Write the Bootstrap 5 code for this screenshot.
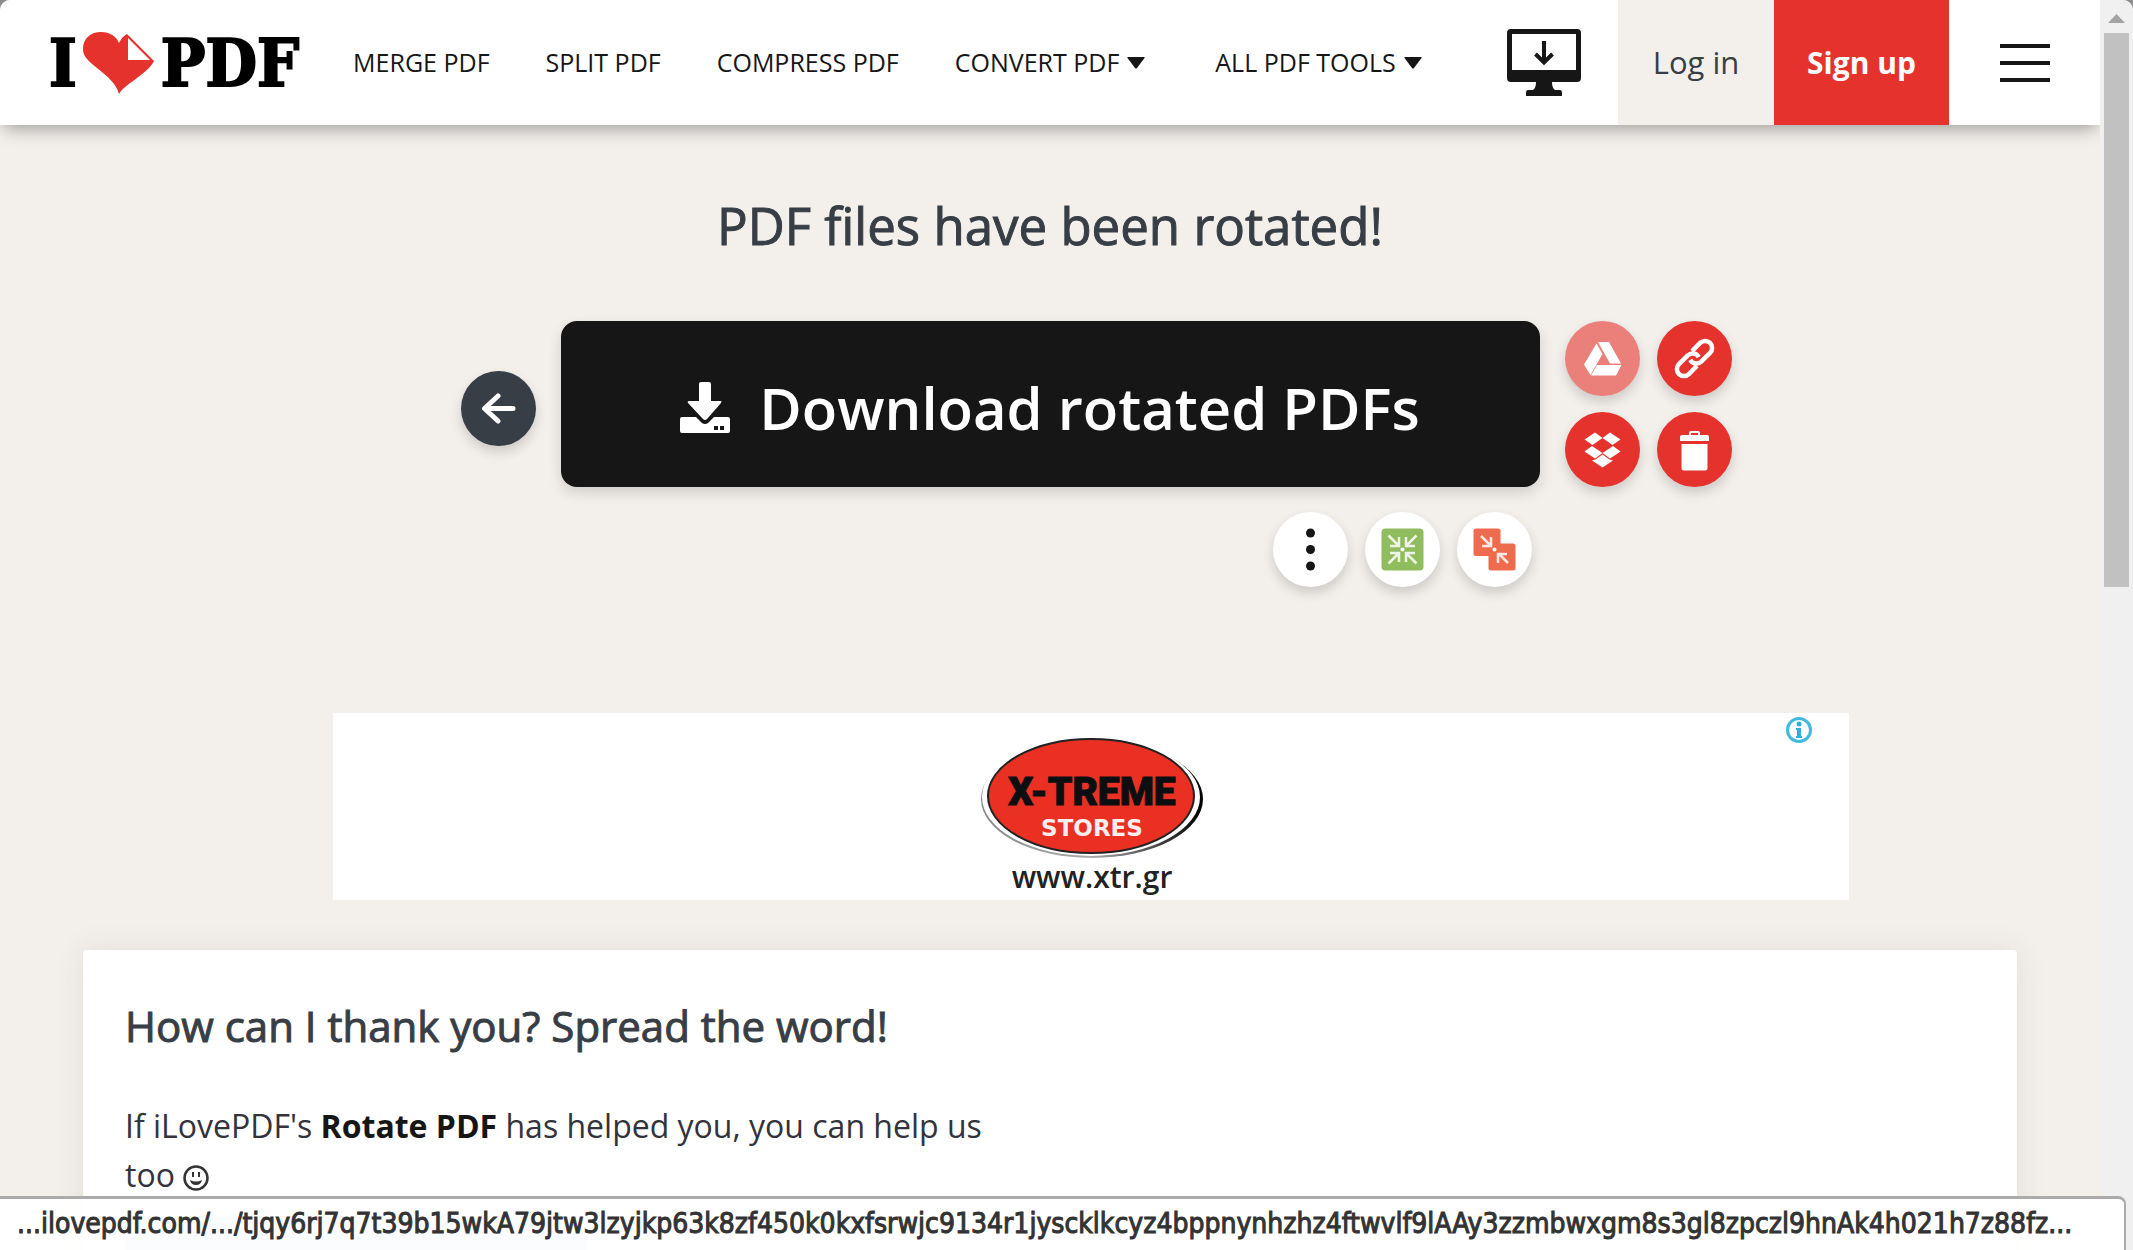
<!DOCTYPE html>
<html lang="en">
<head>
<meta charset="utf-8">
<meta name="viewport" content="width=device-width, initial-scale=1">
<title>iLovePDF - Download rotated PDFs</title>
<link href="https://cdn.jsdelivr.net/npm/bootstrap@5.3.0/dist/css/bootstrap.min.css" rel="stylesheet">
<style>
  :root { --brand: #e5322d; --ink: #161616; --slate: #383e45; --sand: #f3f0ec; }
  body { background: #8c8c8c; color: var(--slate); font-family: "Open Sans", "Noto Sans", sans-serif; }
  a { color: inherit; text-decoration: none; }
  .window { background: var(--sand); border-radius: 10px 10px 0 0; }
  .topbar { min-height: 125px; background: #fff; box-shadow: 0 8px 16px -4px rgba(0,0,0,.34); z-index: 2; }
  .logo { font: bold 66px/1 "DejaVu Serif Condensed", "DejaVu Serif", serif; color: #000; padding-left: 49px; gap: 6px; -webkit-text-stroke: 2px #000; }
  .main-links { gap: 56px; padding-left: 54px; font-size: 25px; color: var(--ink); white-space: nowrap; }
  .main-links .has-menu { gap: 8px; padding-right: 14px; }
  .desktop-link { padding-right: 37px; }
  .account { font-size: 31px; white-space: nowrap; }
  .account-login { background: var(--sand); width: 156px; }
  .account-signup { background: var(--brand); color: #fff; font-size: 30px; font-weight: 700; width: 175px; }
  .menu-btn { width: 151px; border: 0; background: none; }
  .done-title { font-size: 51px; line-height: 60px; font-weight: 400; margin: 70px 0 66px; -webkit-text-stroke: 1px; }
  .download-grid { display: grid; grid-template-columns: 1fr minmax(0, 979px) 1fr; column-gap: 25px; row-gap: 25px; align-items: center; }
  .download-btn { height: 166px; border: 0; border-radius: 16px; background: var(--ink); color: #fff; font-size: 58px; font-weight: 600; gap: 29px; padding-top: 8px; box-shadow: 0 6px 14px rgba(0,0,0,.14); }
  .round { display: block; width: 75px; height: 75px; border: 0; padding: 0; border-radius: 50%; background: var(--brand); box-shadow: 0 6px 12px rgba(0,0,0,.16); }
  .round svg { display: block; }
  .round-back { background: var(--slate); margin-top: 8px; }
  .round-soft { background: #eb807b; }
  .round-white { background: #fff; }
  .side-tools { display: grid; grid-template-columns: 75px 75px; gap: 16px 17px; }
  .more-tools { gap: 17px; padding-right: 8px; }
  .ad { background: #fff; width: 1516px; max-width: 90%; height: 187px; margin: 126px 0 50px 333px; }
  .ad-info { right: 36px; top: 3px; }
  .thanks { background: #fff; border-radius: 4px; margin: 0 83px; padding: 46px 42px; min-height: 480px; box-shadow: 0 0 32px rgba(60,50,20,.09); }
  .thanks h2 { font-size: 42px; line-height: 60px; font-weight: 400; margin: 0 0 45px; -webkit-text-stroke: 1px; }
  .thanks p { font-size: 32px; line-height: 49px; max-width: 880px; margin: 0 0 18px; color: #33333b; }
  .thanks strong { color: var(--ink); font-weight: 700; }
  .share-box { width: 462px; height: 140px; background: #8fa3cc; }
  .status { left: 0; bottom: 0; right: 7px; height: 54px; border: 2px solid #ababab; border-left: 0; border-bottom: 0; border-top-width: 3px; border-radius: 0 8px 0 0; background: rgba(255,255,255,.96); color: #333; font: 28px/50px "DejaVu Sans Condensed", "DejaVu Sans", sans-serif; -webkit-text-stroke: 1px; padding-left: 17px; white-space: nowrap; z-index: 3; }
  .scroll-track { width: 33px; background: #f0f0f0; padding: 14px 4px 0; }
  .scroll-thumb { height: 554px; width: 25px; background: #c1c1c1; margin-top: 10px; }
</style>
</head>
<body>
<div class="window d-flex vh-100 overflow-hidden position-relative">
  <div class="flex-grow-1 overflow-hidden">
    <header class="topbar d-flex align-items-stretch position-relative">
      <a href="#" class="logo d-flex align-items-center" aria-label="I love PDF">
        <span>I</span>
        <svg width="72" height="62" viewBox="0 0 72 62" aria-hidden="true"><path fill="#e5322d" d="M36 62C33 51 24 44 14 36 5 29 0 24 0 17 0 6 8 0 18 0c9 0 15 4 18 11 2-4 4-7 8-9l27 27c-3 6-9 11-17 17-9 7-15 10-18 16z"/><path fill="#fff" d="M45 6v22h22z"/></svg>
        <span>PDF</span>
      </a>
      <nav class="main-links d-flex align-items-center flex-grow-1" aria-label="Tools">
        <a href="#">MERGE PDF</a>
        <a href="#">SPLIT PDF</a>
        <a href="#">COMPRESS PDF</a>
        <a href="#" class="has-menu d-flex align-items-center">CONVERT PDF <svg width="18" height="12" viewBox="0 0 18 12"><path fill="#161616" d="M1 0h16q1 0 .5 1L10 11q-1 1-2 0L.5 1Q0 0 1 0z"/></svg></a>
        <a href="#" class="has-menu d-flex align-items-center">ALL PDF TOOLS <svg width="18" height="12" viewBox="0 0 18 12"><path fill="#161616" d="M1 0h16q1 0 .5 1L10 11q-1 1-2 0L.5 1Q0 0 1 0z"/></svg></a>
      </nav>
      <a href="#" class="desktop-link d-flex align-items-center" aria-label="Desktop app">
        <svg width="74" height="67" viewBox="0 0 74 67"><path fill="#161616" fill-rule="evenodd" d="M4 0h66q4 0 4 4v45q0 4-4 4H45q0 6 3 8h5q2 0 2 3v3H19v-3q0-3 2-3h5q3-2 3-8H4q-4 0-4-4V4q0-4 4-4zm1 5v36h64V5z"/><path d="M37 12v21M28.500 25l8.500 8.500 8.500-8.500" fill="none" stroke="#161616" stroke-width="4"/></svg>
      </a>
      <div class="account d-flex">
        <a href="#" class="account-login d-flex align-items-center justify-content-center">Log in</a>
        <a href="#" class="account-signup d-flex align-items-center justify-content-center">Sign up</a>
      </div>
      <button type="button" class="menu-btn d-flex align-items-center justify-content-center" aria-label="Menu">
        <svg width="50" height="40" viewBox="0 0 50 40"><path d="M0 3h50M0 20h50M0 37h50" stroke="#161616" stroke-width="4"/></svg>
      </button>
    </header>

    <main>
      <h1 class="done-title text-center">PDF files have been rotated!</h1>
      <div class="download-grid">
        <a href="#" class="round round-back ms-auto" aria-label="Back"><svg width="75" height="75" viewBox="0 0 75 75"><path d="M52 37.500H24M37 25L23.500 37.500 37 50" fill="none" stroke="#fff" stroke-width="5" stroke-linecap="round" stroke-linejoin="round"/></svg></a>
        <button type="button" class="download-btn d-flex align-items-center justify-content-center">
          <svg width="50" height="51" viewBox="0 0 50 51" aria-hidden="true"><path fill="#fff" d="M19 2q0-2 2-2h8q2 0 2 2v17h10q1 0 0 2L27 37q-2 2-4 0L8 21q-1-2 1-2h10z"/><path fill="#fff" fill-rule="evenodd" d="M2 35h14l6 6q3 2 6 0l6-6h14q2 0 2 2v12q0 2-2 2H2q-2 0-2-2V37q0-2 2-2zm32 9v4h4v-4zm6 0v4h4v-4z"/></svg>
          <span>Download rotated PDFs</span>
        </button>
        <div class="side-tools">
          <button type="button" class="round round-soft" aria-label="Save to Google Drive"><svg width="75" height="75" viewBox="0 0 75 75"><path fill="#fff" d="M31.500 22.500l6 10.500L25.500 54l-6.500-10.500zM33 21h11l12 21.500H45zM32 44h24.500L51 54.500H26z"/></svg></button>
          <button type="button" class="round" aria-label="Share link"><svg width="75" height="75" viewBox="0 0 75 75"><g transform="rotate(-45 37.500 37.500)" fill="none" stroke="#fff" stroke-width="4.500"><path d="M34 44.500H22.500a7 7 0 0 1 0-14H35a7 7 0 0 1 6.500 9"/><path d="M41 30.500h11.500a7 7 0 0 1 0 14H40a7 7 0 0 1-6.500-9"/></g></svg></button>
          <button type="button" class="round" aria-label="Save to Dropbox"><svg width="75" height="75" viewBox="0 0 75 75"><path fill="#fff" d="M19.500 27.500L30 20.500l7.500 5.500-10 7zM55.500 27.500L45 20.500 37.500 26l10 7zM19.500 39.500l7.500-5.500 10.500 7-7.500 5.500zM55.500 39.500L48 34l-10.500 7 7.500 5.500zM27 48.500l3.500-1 7-5 7 5 3.500 1L37.500 55.500z"/></svg></button>
          <button type="button" class="round" aria-label="Delete files"><svg width="75" height="75" viewBox="0 0 75 75"><path d="M33 23v-2q0-1 1-1h7q1 0 1 1v2" fill="none" stroke="#fff" stroke-width="2"/><path fill="#fff" d="M25 23h25q2 0 2 2v4H23v-4q0-2 2-2zM24.500 32h26v24q0 2.500-2.500 2.500H27q-2.500 0-2.500-2.500z"/></svg></button>
        </div>
        <span></span>
        <div class="more-tools d-flex justify-content-end">
          <button type="button" class="round round-white" aria-label="More"><svg width="75" height="75" viewBox="0 0 75 75" fill="#161616"><circle cx="37.500" cy="21" r="4.500"/><circle cx="37.500" cy="37.500" r="4.500"/><circle cx="37.500" cy="54" r="4.500"/></svg></button>
          <button type="button" class="round round-white" aria-label="Compress PDF"><svg width="75" height="75" viewBox="0 0 75 75"><rect x="16.500" y="16.500" width="42" height="42" rx="4" fill="#8fbc5d"/><path d="M23.500 23.500l9.500 9.500M34 25v9h-9M51.500 23.500L42 33M41 25v9h9M23.500 51.500L33 42M25 41h9v9M51.500 51.500L42 42M50 41h-9v9" stroke="#fff" stroke-opacity=".85" stroke-width="2.500" fill="none"/><circle cx="37.500" cy="37.500" r="2" fill="#fff"/></svg></button>
          <button type="button" class="round round-white" aria-label="Merge PDF"><svg width="75" height="75" viewBox="0 0 75 75"><path fill="#ee6c4d" d="M19 16.500h22q2.500 0 2.500 2.500v12.500H56q2.500 0 2.500 2.500v22q0 2.500-2.500 2.500H34q-2.500 0-2.500-2.500V44H19q-2.500 0-2.500-2.500V19q0-2.500 2.500-2.500z"/><path d="M24 24l9 9M34 25v9h-9M51 51l-9-9M50 42h-9v9" stroke="#fff" stroke-opacity=".85" stroke-width="2.500" fill="none"/><circle cx="37.500" cy="37.500" r="2" fill="#fff"/></svg></button>
        </div>
      </div>

      <aside class="ad position-relative d-flex justify-content-center" aria-label="Advertisement">
        <svg width="226" height="187" viewBox="0 0 226 187">
          <defs><linearGradient id="rim" x1="0" y1="0" x2="1" y2="0"><stop offset="0" stop-color="#888"/><stop offset=".5" stop-color="#aaa"/><stop offset="1" stop-color="#000"/></linearGradient></defs>
          <ellipse cx="114" cy="86" rx="111" ry="59" fill="url(#rim)"/>
          <ellipse cx="113" cy="84" rx="109" ry="59" fill="#fff"/>
          <ellipse cx="113" cy="83" rx="103" ry="57" fill="#ea3023" stroke="#222" stroke-width="2"/>
          <text x="114" y="92" text-anchor="middle" font-family="Roboto,sans-serif" font-weight="900" font-size="39" fill="#0c0f12" stroke="#0c0f12">X-TREME</text>
          <text x="114" y="123" text-anchor="middle" font-family="'DejaVu Sans',sans-serif" font-weight="700" font-size="23" fill="#fbeeee">STORES</text>
          <text x="114" y="175" text-anchor="middle" font-family="'Open Sans',sans-serif" font-weight="600" font-size="30" fill="#222">www.xtr.gr</text>
        </svg>
        <a href="#" class="ad-info position-absolute" aria-label="Ad information"><svg class="d-block" width="28" height="28" viewBox="0 0 28 28"><circle cx="14" cy="14" r="11.500" fill="none" stroke="#3fb9dd" stroke-width="3"/><circle cx="14" cy="8" r="2.500" fill="#2cb0d8"/><path fill="#2cb0d8" d="M11 12h5v8h1v2h-6v-2h1v-6h-1z"/></svg></a>
      </aside>

      <section class="thanks">
        <h2>How can I thank you? Spread the word!</h2>
        <p>If iLovePDF's <strong>Rotate PDF</strong> has helped you, you can help us too <svg width="26" height="26" viewBox="0 0 26 26" role="img" aria-label="smile"><circle cx="13" cy="13" r="11.500" fill="none" stroke="#333" stroke-width="2.500"/><path d="M7 15q1 5 6 5t6-5q-6 3-12 0z" fill="#333"/><path d="M10 7v5M16 7v5" stroke="#333" stroke-width="2"/></svg></p>
        <div class="share-box"></div>
      </section>
    </main>
  </div>
  <div class="scroll-track flex-shrink-0" aria-hidden="true">
    <svg class="d-block mx-auto" width="17" height="9" viewBox="0 0 17 9"><path fill="#a3a3a3" d="M8.500 0L17 9H0z"/></svg>
    <div class="scroll-thumb"></div>
  </div>
  <div class="status position-absolute overflow-hidden">...ilovepdf.com/.../tjqy6rj7q7t39b15wkA79jtw3lzyjkp63k8zf450k0kxfsrwjc9134r1jyscklkcyz4bppnynhzhz4ftwvlf9lAAy3zzmbwxgm8s3gl8zpczl9hnAk4h021h7z88fz...</div>
</div>
<script src="https://cdn.jsdelivr.net/npm/bootstrap@5.3.0/dist/js/bootstrap.bundle.min.js"></script>
</body>
</html>
